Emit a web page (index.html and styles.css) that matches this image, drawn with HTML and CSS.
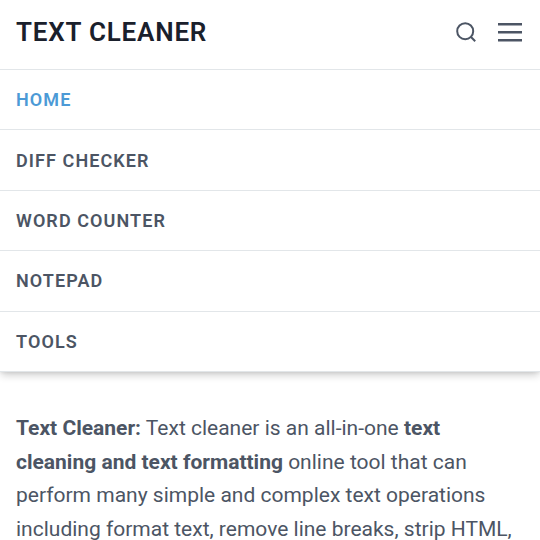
FILE: index.html
```html
<!DOCTYPE html>
<html lang="en">
<head>
<meta charset="utf-8">
<title>Text Cleaner</title>
<link rel="stylesheet" href="styles.css">
</head>
<body>
<header class="header">
  <div class="bar">
    <a class="brand">TEXT CLEANER</a>
    <div class="actions">
      <svg class="search" width="24" height="24" viewBox="0 0 24 24"><circle cx="11.2" cy="11.2" r="8"/><path d="M17 17l4.2 4.2"/></svg>
      <svg class="menu" width="24" height="24" viewBox="0 0 24 24"><path d="M0 4.3h24M0 12.3h24M0 20.3h24"/></svg>
    </div>
  </div>
  <nav class="nav">
    <a class="item active">HOME</a>
    <a class="item">DIFF CHECKER</a>
    <a class="item">WORD COUNTER</a>
    <a class="item">NOTEPAD</a>
    <a class="item">TOOLS</a>
  </nav>
</header>
<main class="content">
  <p><strong>Text Cleaner:</strong> Text cleaner is an all-in-one <strong>text cleaning and text formatting</strong> online tool that can perform many simple and complex text operations including format text, remove line breaks, strip HTML,</p>
</main>
</body>
</html>
```
FILE: styles.css
```css
* { box-sizing: border-box; }
body {
  margin: 0;
  height: 540px;
  overflow: hidden;
  background: #fff;
  color: #4c5564;
  font-family: Roboto, sans-serif;
}
.header {
  height: 372px;
  border-bottom: 1px solid #e2e6e9;
  box-shadow: 0 4px 8px -1px rgba(0, 0, 0, .2), 0 1px 3px rgba(0, 0, 0, .06);
}
.bar {
  height: 69px;
  padding: 0 18px 5px 16px;
  display: flex;
  align-items: center;
  justify-content: space-between;
}
.brand { color: #1a202c; font-size: 26px; font-weight: 600; letter-spacing: .8px; }
.actions { display: flex; gap: 20px; }
svg { display: block; fill: none; stroke: #4c5564; stroke-width: 2; }
.menu { stroke-width: 2.6; }
.item {
  display: flex;
  align-items: center;
  height: 60.4px;
  padding-left: 16px;
  border-top: 1px solid #e2e6e9;
  font-size: 18px;
  font-weight: 600;
  letter-spacing: 1.08px;
}
.active { color: #4c9ad6; }
.content { padding: 40.2px 20px 0 16px; }
p { margin: 0; font-size: 21px; line-height: 33.6px; }
```
